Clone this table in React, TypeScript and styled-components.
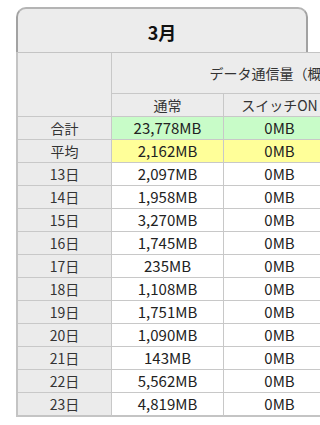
import React from 'react';
import styled, { createGlobalStyle } from 'styled-components';

const GlobalStyle = createGlobalStyle`
  html, body {
    margin: 0;
    padding: 0;
    background: #ffffff;
    overflow: hidden;
  }
  body {
    font-family: "Noto Sans CJK JP", "Noto Sans", sans-serif;
    color: #333;
  }
`;

const Page = styled.div`
  padding: 7px 0 0 16px;
  width: 460px;
`;

const Tab = styled.div`
  box-sizing: border-box;
  width: 292px;
  height: 45px;
  border: 2px solid #a2a2a2;
  border-top-color: #b4b4b4;
  border-bottom: none;
  border-radius: 10px 10px 0 0;
  background: #ececec;
  display: flex;
  align-items: center;
  justify-content: center;
  padding-top: 3px;
`;

const Title = styled.span`
  font-size: 18px;
  font-weight: 700;
  color: #111;
`;

const Table = styled.table`
  border-collapse: separate;
  border-spacing: 0;
  border-top: 1px solid #c4c4c4;
  border-left: 2px solid #c4c4c4;
  table-layout: fixed;
`;

const Th = styled.th<{ $tall?: boolean; $w?: number }>`
  padding: 0;
  width: ${p => (p.$w ? `${p.$w}px` : 'auto')};
  height: ${p => (p.$tall ? '40px' : '22px')};
  background: #ececec;
  border-right: 1px solid #c8c8c8;
  border-bottom: 1px solid #c8c8c8;
  font-size: 14px;
  font-weight: 400;
  color: #333;
  text-align: center;
  vertical-align: middle;
  white-space: nowrap;
`;

const Label = styled.td<{ $last?: boolean }>`
  padding: 0;
  height: 22px;
  background: #ebebeb;
  border-right: 1px solid #c8c8c8;
  border-bottom: ${p => (p.$last ? '2px solid #c4c4c4' : '1px solid #c8c8c8')};
  font-size: 14px;
  color: #333;
  text-align: center;
  line-height: 22px;
`;

const Cell = styled.td<{ $tone?: 'green' | 'yellow'; $last?: boolean }>`
  padding: 0;
  height: 22px;
  background: ${p =>
    p.$tone === 'green' ? '#c8fcc8' : p.$tone === 'yellow' ? '#ffff99' : '#ffffff'};
  border-right: 1px solid #c8c8c8;
  border-bottom: ${p => (p.$last ? '2px solid #c4c4c4' : '1px solid #c8c8c8')};
  font-size: 15px;
  color: #222;
  text-align: center;
  line-height: 22px;
`;

interface Row {
  label: string;
  normal: string;
  switchOn: string;
  tone?: 'green' | 'yellow';
}

const rows: Row[] = [
  { label: '合計', normal: '23,778MB', switchOn: '0MB', tone: 'green' },
  { label: '平均', normal: '2,162MB', switchOn: '0MB', tone: 'yellow' },
  { label: '13日', normal: '2,097MB', switchOn: '0MB' },
  { label: '14日', normal: '1,958MB', switchOn: '0MB' },
  { label: '15日', normal: '3,270MB', switchOn: '0MB' },
  { label: '16日', normal: '1,745MB', switchOn: '0MB' },
  { label: '17日', normal: '235MB', switchOn: '0MB' },
  { label: '18日', normal: '1,108MB', switchOn: '0MB' },
  { label: '19日', normal: '1,751MB', switchOn: '0MB' },
  { label: '20日', normal: '1,090MB', switchOn: '0MB' },
  { label: '21日', normal: '143MB', switchOn: '0MB' },
  { label: '22日', normal: '5,562MB', switchOn: '0MB' },
  { label: '23日', normal: '4,819MB', switchOn: '0MB' },
];

const App: React.FC = () => {
  return (
    <Page>
      <GlobalStyle />
      <Tab>
        <Title>3月</Title>
      </Tab>
      <Table>
        <thead>
          <tr>
            <Th $tall $w={93} rowSpan={2}></Th>
            <Th $tall colSpan={3}>データ通信量（概算）</Th>
          </tr>
          <tr>
            <Th $w={111}>通常</Th>
            <Th $w={111}>スイッチON</Th>
            <Th $w={111}></Th>
          </tr>
        </thead>
        <tbody>
          {rows.map((r, i) => {
            const last = i === rows.length - 1;
            return (
              <tr key={r.label}>
                <Label $last={last}>{r.label}</Label>
                <Cell $tone={r.tone} $last={last}>{r.normal}</Cell>
                <Cell $tone={r.tone} $last={last}>{r.switchOn}</Cell>
                <Cell $tone={r.tone} $last={last}></Cell>
              </tr>
            );
          })}
        </tbody>
      </Table>
    </Page>
  );
};

export default App;
